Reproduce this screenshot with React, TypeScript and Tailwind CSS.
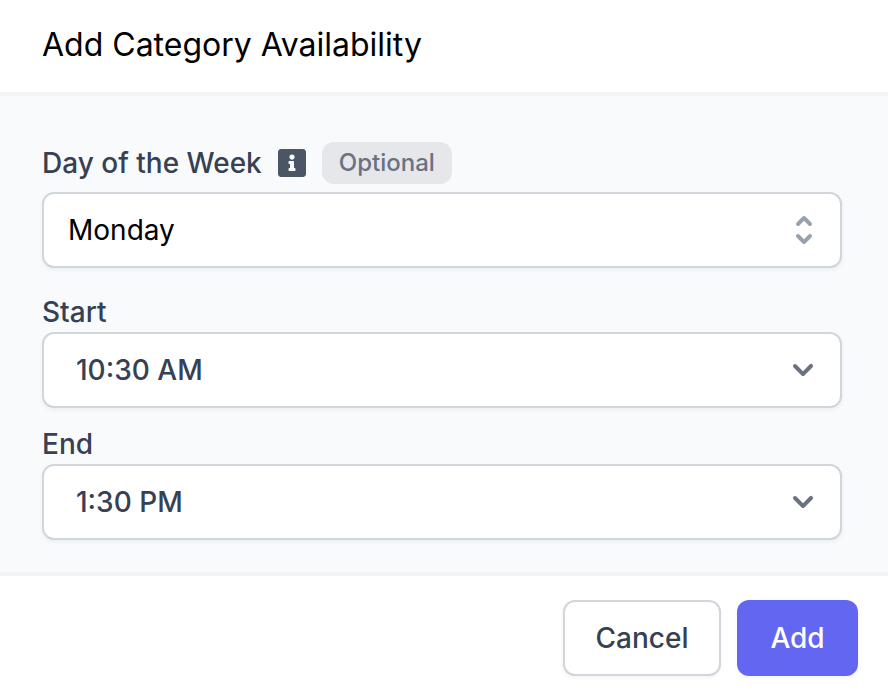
import type { ReactNode } from "react";

function Chevron() {
  return (
    <svg viewBox="0 0 20 20" className="h-10 w-10 text-gray-500" fill="currentColor">
      <path fillRule="evenodd" clipRule="evenodd" d="M5.293 7.293a1 1 0 011.414 0L10 10.586l3.293-3.293a1 1 0 111.414 1.414l-4 4a1 1 0 01-1.414 0l-4-4a1 1 0 010-1.414z" />
    </svg>
  );
}

function Selector() {
  return (
    <svg viewBox="0 0 20 20" className="h-10 w-10 text-gray-400" fill="currentColor">
      <path fillRule="evenodd" clipRule="evenodd" d="M10 3a1 1 0 01.707.293l3 3a1 1 0 01-1.414 1.414L10 5.414 7.707 7.707a1 1 0 01-1.414-1.414l3-3A1 1 0 0110 3zm-3.707 9.293a1 1 0 011.414 0L10 14.586l2.293-2.293a1 1 0 011.414 1.414l-3 3a1 1 0 01-1.414 0l-3-3a1 1 0 010-1.414z" />
    </svg>
  );
}

function Field({ value, icon, className }: { value: string; icon: ReactNode; className: string }) {
  return (
    <button className={`flex h-[76px] w-[800px] items-center justify-between rounded-xl border-2 border-gray-300 bg-white text-[28px] shadow-[0_2px_4px_rgba(0,0,0,0.05)] ${className}`}>
      <span>{value}</span>
      {icon}
    </button>
  );
}

export default function App() {
  return (
    <div className="flex h-[696px] w-[888px] flex-col overflow-hidden bg-white font-['Inter',sans-serif] text-[28px] leading-10">
      <header className="h-24 border-b-4 border-gray-100 px-[42px] pt-[25px]">
        <h1 className="text-[32px] leading-10 text-black">Add Category Availability</h1>
      </header>
      <main className="flex h-[480px] flex-col border-b-4 border-gray-100 bg-gray-50 px-[42px] pt-[46px] font-medium text-gray-700">
        <div className="flex h-[42px] items-center">
          <span>Day of the Week</span>
          <svg viewBox="0 0 448 512" className="ml-4 h-8 w-7 text-gray-600" fill="currentColor">
            <path d="M400 32H48C21.5 32 0 53.5 0 80v352c0 26.500 21.500 48 48 48h352c26.500 0 48-21.500 48-48V80c0-26.500-21.500-48-48-48zm-176 86c23.200 0 42 18.800 42 42s-18.800 42-42 42-42-18.800-42-42 18.800-42 42-42zm56 254c0 6.600-5.400 12-12 12h-88c-6.600 0-12-5.400-12-12v-24c0-6.600 5.400-12 12-12h12v-64h-12c-6.600 0-12-5.400-12-12v-24c0-6.600 5.400-12 12-12h64c6.600 0 12 5.400 12 12v100h12c6.600 0 12 5.400 12 12v24z" />
          </svg>
          <span className="ml-4 flex h-[42px] w-[130px] items-center justify-center rounded-xl bg-gray-200 text-2xl text-gray-500">Optional</span>
        </div>
        <Field value="Monday" icon={<Selector />} className="mt-2 pr-4 pl-6 font-normal text-black" />
        <span className="mt-6 h-10">Start</span>
        <Field value="10:30 AM" icon={<Chevron />} className="pr-[17px] pl-8" />
        <span className="mt-4 h-10">End</span>
        <Field value="1:30 PM" icon={<Chevron />} className="pr-[17px] pl-8" />
      </main>
      <footer className="flex h-[120px] justify-end gap-4 pt-6 pr-[30px] font-medium">
        <button className="h-[76px] w-[158px] rounded-xl border-2 border-gray-300 bg-white text-gray-700 shadow-[0_2px_4px_rgba(0,0,0,0.05)]">Cancel</button>
        <button className="h-[76px] w-[121px] rounded-xl bg-[#6366f1] text-white shadow-[0_2px_4px_rgba(0,0,0,0.05)]">Add</button>
      </footer>
    </div>
  );
}
